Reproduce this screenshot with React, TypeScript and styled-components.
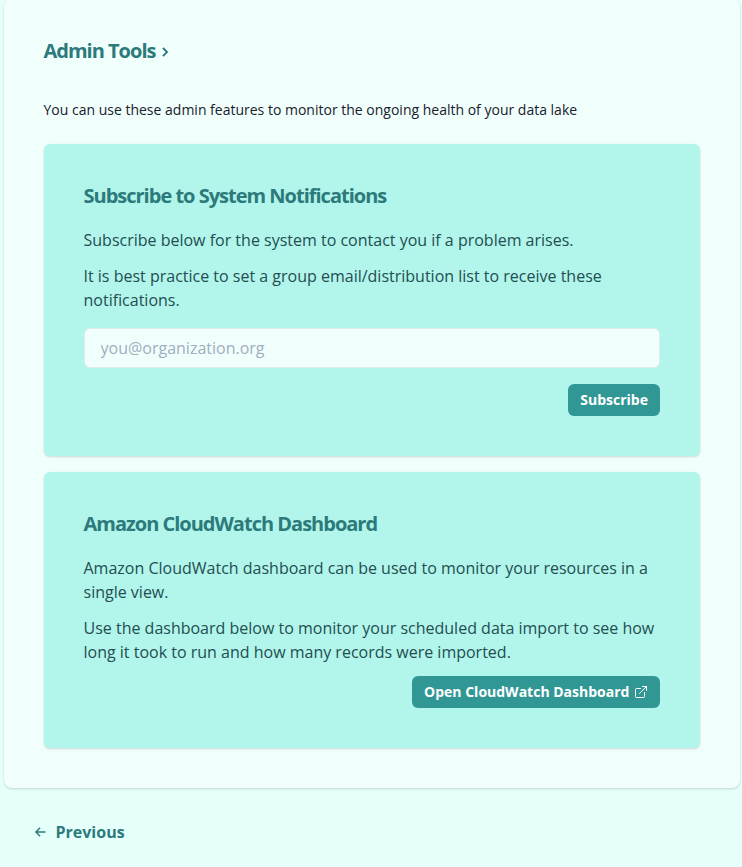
import React from "react";
import styled, { createGlobalStyle } from "styled-components";

const GlobalStyle = createGlobalStyle`
  *, *::before, *::after { box-sizing: border-box; }
  html { line-height: 1.5; }
  body {
    margin: 0;
    background: #e6fffa;
    color: #1a202c;
    font-family: "Open Sans", sans-serif;
    font-size: 16px;
  }
  h2, h3, p { margin: 0; }
`;

const Page = styled.main`
  width: 742px;
  height: 867px;
  overflow: hidden;
  padding: 0 2px 0 3.5px;
  background: #e5fffb;
`;

const Panel = styled.section`
  height: 789px;
  margin-top: -1px;
  padding: 40px;
  background: #f0fffc;
  border-radius: 8px;
  box-shadow: 0 1px 3px rgba(0, 0, 0, 0.1), 0 1px 2px rgba(0, 0, 0, 0.06);
`;

const PageTitle = styled.h2`
  display: flex;
  align-items: center;
  gap: 6px;
  height: 24px;
  font-size: 20px;
  font-weight: 700;
  line-height: 24px;
  letter-spacing: -1px;
  color: #2c7a7b;
`;

const Intro = styled.p`
  margin-top: 36px;
  font-size: 14px;
  line-height: 21px;
`;

const Card = styled.article`
  margin-top: 24px;
  padding: 40px;
  background: #b2f5ea;
  border-radius: 6px;
  box-shadow: 0 1px 3px rgba(0, 0, 0, 0.1), 0 1px 2px rgba(0, 0, 0, 0.06);
  & + & { margin-top: 16px; }
`;

const CardTitle = styled.h3`
  margin-bottom: 20px;
  font-size: 20px;
  font-weight: 700;
  line-height: 24px;
  letter-spacing: -1px;
  color: #2c7a7b;
`;

const CardText = styled.p`
  color: #234e52;
  & + & { margin-top: 12px; }
`;

const EmailInput = styled.input`
  display: block;
  width: 100%;
  height: 40px;
  margin: 16px 0;
  padding: 0 16px;
  font: inherit;
  color: #234e52;
  background: #f0fffc;
  border: 1px solid #e2e8f0;
  border-radius: 6px;
  &::placeholder { color: #a0aec0; opacity: 1; }
`;

const Actions = styled.div<{ $top?: number }>`
  display: flex;
  justify-content: flex-end;
  margin-top: ${({ $top = 0 }) => $top}px;
`;

const Button = styled.button`
  display: inline-flex;
  align-items: center;
  gap: 3.6px;
  height: 32px;
  padding: 0 12px 1px;
  border: 0;
  border-radius: 6px;
  background: #319795;
  color: #fff;
  font: 700 14px/21px "Open Sans", sans-serif;
`;

const BackLink = styled.a`
  display: inline-flex;
  align-items: center;
  gap: 8px;
  margin: 32px 0 0 28px;
  font-weight: 700;
  color: #2c7a7b;
`;

const ChevronIcon = () => (
  <svg width="8" height="12" viewBox="0 0 8 12" fill="none" stroke="currentColor" strokeWidth="1.9">
    <path d="M2 3 6 7.1 2 11.2" />
  </svg>
);

const ExternalIcon = () => (
  <svg width="15" height="15" viewBox="0 0 15 15" fill="none" stroke="currentColor" strokeLinecap="round" strokeLinejoin="round">
    <path d="M9.5 2.5h4v4M13.5 2.5 6.5 9.5M7.5 4.5h-4a1 1 0 0 0-1 1v7a1 1 0 0 0 1 1h7a1 1 0 0 0 1-1v-4" />
  </svg>
);

const ArrowIcon = () => (
  <svg width="16" height="16" viewBox="0 0 16 16" fill="none" stroke="currentColor" strokeWidth="1.4">
    <path d="M13.5 8H4M8.1 3.8 3.9 8l4.2 4.2" />
  </svg>
);

export default function App() {
  return (
    <Page>
      <GlobalStyle />
      <Panel>
        <PageTitle>Admin Tools <ChevronIcon /></PageTitle>
        <Intro>You can use these admin features to monitor the ongoing health of your data lake</Intro>
        <Card>
          <CardTitle>Subscribe to System Notifications</CardTitle>
          <CardText>Subscribe below for the system to contact you if a problem arises.</CardText>
          <CardText>It is best practice to set a group email/distribution list to receive these notifications.</CardText>
          <EmailInput type="email" placeholder="you@organization.org" />
          <Actions><Button>Subscribe</Button></Actions>
        </Card>
        <Card>
          <CardTitle>Amazon CloudWatch Dashboard</CardTitle>
          <CardText>Amazon CloudWatch dashboard can be used to monitor your resources in a single view.</CardText>
          <CardText>Use the dashboard below to monitor your scheduled data import to see how long it took to run and how many records were imported.</CardText>
          <Actions $top={12}><Button>Open CloudWatch Dashboard <ExternalIcon /></Button></Actions>
        </Card>
      </Panel>
      <BackLink><ArrowIcon />Previous</BackLink>
    </Page>
  );
}
